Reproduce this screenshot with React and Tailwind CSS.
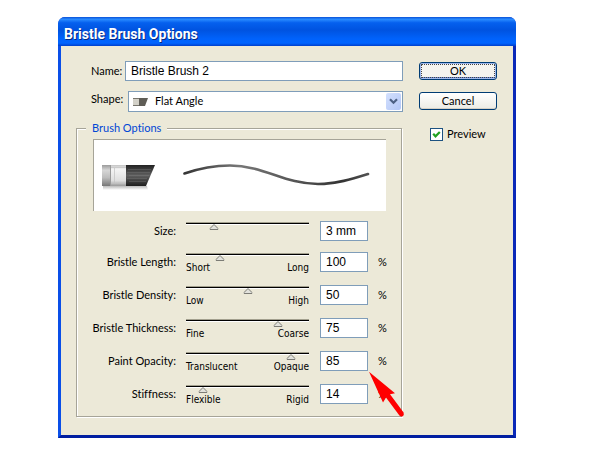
import { useState } from "react";

const ROWS = [
  { id: "size", label: "Size:", position: 23, amount: "3 mm", unit: "", low: "", high: "" },
  { id: "length", label: "Bristle Length:", position: 28, amount: "100", unit: "%", low: "Short", high: "Long" },
  { id: "density", label: "Bristle Density:", position: 50, amount: "50", unit: "%", low: "Low", high: "High" },
  { id: "thickness", label: "Bristle Thickness:", position: 75, amount: "75", unit: "%", low: "Fine", high: "Coarse" },
  { id: "opacity", label: "Paint Opacity:", position: 85, amount: "85", unit: "%", low: "Translucent", high: "Opaque", pointed: true },
  { id: "stiffness", label: "Stiffness:", position: 14, amount: "14", unit: "%", low: "Flexible", high: "Rigid" },
];

function Slider({ row }) {
  const [value, setValue] = useState(row.position);
  return (
    <div className="h-5 pt-px">
      <div className="relative">
        <div className="h-px bg-[#a3a08e]" />
        <div className="h-px bg-black" />
        <div className="h-px bg-white" />
        <svg
          className="absolute top-[2px] h-[6px] w-[9px] -translate-x-1/2"
          style={{ left: `${value}%` }}
          viewBox="0 0 9 6"
          aria-hidden="true"
        >
          <path d="M4.5 0.5 L8.5 4.5 V5.5 H0.5 V4.5 Z" fill="#e2e2dc" stroke="#7c7c76" />
        </svg>
        <input
          id={row.id}
          type="range"
          min="0"
          max="100"
          value={value}
          onChange={(e) => setValue(Number(e.target.value))}
          className="absolute inset-x-0 top-0 m-0 h-2 w-full opacity-0"
        />
      </div>
      <div className="flex justify-between pt-1 font-['DejaVu_Sans_Condensed','DejaVu_Sans',sans-serif] text-[10px] leading-4">
        <span>{row.low}</span>
        <span>{row.high}</span>
      </div>
    </div>
  );
}

function Pointer() {
  return (
    <svg className="pointer-events-none absolute left-full top-[20px] z-10 h-[47px] w-[38px]" viewBox="368 371 38 47" aria-hidden="true">
      <path d="M369 371.7 L395 393.3 L390 394.3 L403.6 412.5 Q404.5 415 402.5 416.4 Q400.5 417 399.4 415.4 L386 397.5 L383 402.5 Z" fill="#ff0000" />
    </svg>
  );
}

function OptionRow({ row }) {
  return (
    <div className="grid h-5 grid-cols-[85px_1fr_48px_18px]">
      <label htmlFor={row.id} className="whitespace-nowrap text-right leading-5">
        {row.label}
      </label>
      <div className="pl-[10px] pr-[11px]">
        <Slider row={row} />
      </div>
      <div className="relative">
        <input
          type="text"
          aria-label={row.label}
          defaultValue={row.amount}
          className="block h-5 w-full border border-[#7f9db9] bg-white pl-[5px] font-['Liberation_Sans',Arial,sans-serif] text-xs outline-none"
        />
        {row.pointed && <Pointer />}
      </div>
      <span className="pl-[10px] leading-5">{row.unit}</span>
    </div>
  );
}

function BrushPreview() {
  return (
    <svg className="h-[71px] w-full" viewBox="94 140 292 71" role="img" aria-label="Flat angle brush and its stroke">
      <defs>
        <linearGradient id="handle" x1="0" y1="0" x2="0" y2="1">
          <stop offset="0" stopColor="#9b9b9b" />
          <stop offset="0.25" stopColor="#d6d6d6" />
          <stop offset="0.6" stopColor="#bdbdbd" />
          <stop offset="1" stopColor="#777" />
        </linearGradient>
        <linearGradient id="ferrule" x1="0" y1="0" x2="0" y2="1">
          <stop offset="0" stopColor="#c4c4c4" />
          <stop offset="0.2" stopColor="#f4f4f4" />
          <stop offset="0.75" stopColor="#dedede" />
          <stop offset="1" stopColor="#9a9a9a" />
        </linearGradient>
        <linearGradient id="bristles" x1="0" y1="0" x2="0" y2="1">
          <stop offset="0" stopColor="#222" />
          <stop offset="0.5" stopColor="#606060" />
          <stop offset="1" stopColor="#1e1e1e" />
        </linearGradient>
        <linearGradient id="shade" x1="0" y1="0" x2="0" y2="1">
          <stop offset="0" stopColor="#bbb" />
          <stop offset="1" stopColor="#fff" />
        </linearGradient>
        <linearGradient id="stroke" gradientUnits="userSpaceOnUse" x1="183" y1="0" x2="370" y2="0">
          <stop offset="0" stopColor="#333" />
          <stop offset="0.3" stopColor="#777" />
          <stop offset="0.6" stopColor="#555" />
          <stop offset="0.85" stopColor="#333" />
          <stop offset="1" stopColor="#555" />
        </linearGradient>
      </defs>
      <path d="M103 186 H147 L148 190 H103 Z" fill="url(#shade)" />
      <rect x="102" y="165" width="9" height="21" fill="url(#handle)" />
      <rect x="110" y="165" width="16" height="21" fill="url(#ferrule)" />
      <path d="M110.5 165 V186" stroke="#999" />
      <path d="M114.5 168 V183 M111 167.5 H126 M111 183.5 H126" stroke="#c2c2c2" strokeWidth="0.7" />
      <path d="M126 165 H155 L146 186 H126 Z" fill="url(#bristles)" />
      <path d="M128 169.5 H151 M127 172.5 H150 M129 175.5 H149 M127 178.5 H147 M129 181.5 H146" stroke="#888" strokeWidth="0.5" opacity="0.6" />
      <path
        d="M184.500 173.500 C199 168.500 214 165.500 230 165.500 C264 165.500 284 184 318 184 C336 184 352 179 368 174"
        fill="none"
        stroke="url(#stroke)"
        strokeWidth="2.6"
        strokeLinecap="round"
      />
    </svg>
  );
}

export default function App() {
  const [preview, setPreview] = useState(true);
  return (
    <div className="bg-white pb-3 pl-[58px] pr-[84px] pt-[17px] font-['Lato','Liberation_Sans',sans-serif] text-[11px] text-black [font-variant-ligatures:none]">
      <section className="rounded-t-[7px] bg-[#0a3ad0]">
        <header className="flex h-[29px] items-center rounded-t-[7px] bg-[linear-gradient(180deg,#0a52d8_0%,#2a8bff_8%,#0560ee_20%,#0053e0_45%,#0062fb_75%,#0064ff_90%,#003fcb_100%)] pl-[6px] pt-1">
          <h1 className="font-['Roboto','Liberation_Sans',sans-serif] text-sm font-bold text-white [text-shadow:1px_1px_0_#0a2a80]">
            Bristle Brush Options
          </h1>
        </header>
        <form
          onSubmit={(e) => e.preventDefault()}
          className="flex gap-4 border-x-[3px] border-b-[3px] border-b-[#001ea0] border-l-[#0a4fe8] border-r-[#0a28b8] bg-[#ece9d8] pb-[18px] pl-[15px] pr-4 pt-[15px]"
        >
          <div className="min-w-0 flex-1">
            <div className="flex pl-[15px]">
              <label htmlFor="name" className="w-[34px] leading-5">Name:</label>
              <input
                id="name"
                type="text"
                defaultValue="Bristle Brush 2"
                className="h-5 min-w-0 flex-1 border border-[#7f9db9] bg-white pl-[5px] font-['Liberation_Sans',Arial,sans-serif] text-xs outline-none"
              />
            </div>
            <div className="mt-[10px] flex pl-[15px]">
              <label htmlFor="shape" className="w-[37px] leading-4">Shape:</label>
              <div className="relative h-[21px] min-w-0 flex-1">
                <select
                  id="shape"
                  className="block h-full w-full appearance-none border border-[#7f9db9] bg-white pl-[26px] outline-none"
                >
                  <option>Flat Angle</option>
                </select>
                <svg className="pointer-events-none absolute left-[5px] top-[6px] h-[10px] w-[15px]" viewBox="0 0 15 10" aria-hidden="true">
                  <rect x="0" y="1" width="7" height="8" fill="#d3d1c8" />
                  <path d="M0 1.5 H7 M0 8.5 H7" stroke="#77756d" />
                  <path d="M6 1 H15 L12 9 H6 Z" fill="#5f5d56" />
                </svg>
                <span className="pointer-events-none absolute inset-y-[2px] right-[2px] flex w-[15px] items-center justify-center rounded-[2px] bg-linear-to-br from-[#d3e0fd] to-[#b3c7f7]">
                  <svg className="h-[7px] w-[9px]" viewBox="0 0 9 7" fill="none" stroke="#4d6185" strokeWidth="2.200" aria-hidden="true">
                    <path d="M1 1.300 L4.500 4.800 L8 1.300" />
                  </svg>
                </span>
              </div>
            </div>
            <fieldset className="mr-px mt-2 border border-[#a6a498] pb-3 pl-4 pr-[15px] shadow-[1px_1px_0_#fff,inset_1px_1px_0_#fff]">
              <legend className="-ml-[7px] bg-[#ece9d8] px-[6px] leading-4 text-[#0046d5]">Brush Options</legend>
              <div className="mt-[3px] h-[72px] border-l border-t border-[#a6a498] bg-white">
                <BrushPreview />
              </div>
              <div className="-ml-[2px] mt-[10px] flex flex-col gap-[11px]">
                <OptionRow row={ROWS[0]} />
                <div className="flex flex-col gap-[13px]">
                  {ROWS.slice(1).map((row) => (
                    <OptionRow key={row.id} row={row} />
                  ))}
                </div>
              </div>
            </fieldset>
          </div>
          <div className="w-[78px] shrink-0 pt-px">
            <button
              type="submit"
              className="flex h-[18px] w-full items-center justify-center rounded-[3px] border border-[#003c74] bg-[#f5f4ef] shadow-[inset_0_0_0_1px_#9fb8ec,inset_0_-2px_0_#6d8ddb] outline-1 -outline-offset-3 outline-dotted outline-[#444]"
            >
              OK
            </button>
            <button
              type="button"
              className="mt-3 flex h-[18px] w-full items-center justify-center rounded-[3px] border border-[#003c74] bg-linear-to-b from-white to-[#ecebe4] shadow-[inset_0_-1px_0_#d6d0c5]"
            >
              Cancel
            </button>
            <label className="ml-[11px] mt-[15px] flex items-center gap-1 leading-[18px]">
              <span className="relative block h-[13px] w-[13px]">
                <input
                  type="checkbox"
                  checked={preview}
                  onChange={(e) => setPreview(e.target.checked)}
                  className="block h-[13px] w-[13px] appearance-none border border-[#1d5281] bg-white"
                />
                {preview && (
                  <svg className="pointer-events-none absolute inset-0" viewBox="0 0 13 13" fill="none" stroke="#21a121" strokeWidth="2.200" aria-hidden="true">
                    <path d="M3.200 5.800 L5.500 8.300 L9.800 3.900" />
                  </svg>
                )}
              </span>
              Preview
            </label>
          </div>
        </form>
      </section>
    </div>
  );
}
